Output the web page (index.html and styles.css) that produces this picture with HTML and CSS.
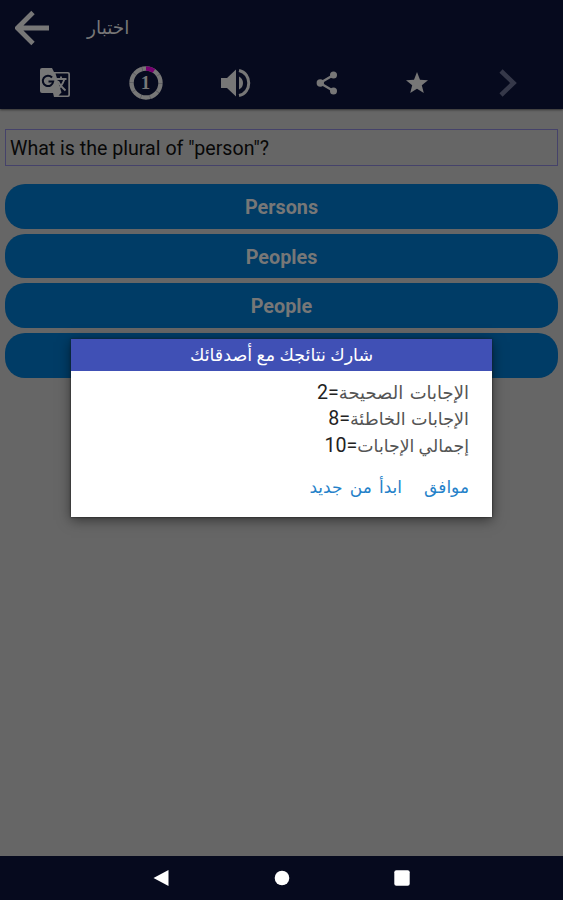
FILE: index.html
```
<!DOCTYPE html>
<html lang="ar">

<head>
  <meta charset="UTF-8">
  <meta name="viewport" content="width=device-width, initial-scale=1.0">
  <title>اختبار</title>
  <link rel="stylesheet" href="styles.css">
</head>

<body>
  <header class="header">
    <div class="header__top">
      <svg class="header__back" viewBox="0 0 36 36">
        <path d="M34 18H3M18 2.500L2.500 18L18 33.500" fill="none" stroke="currentColor" stroke-width="4.800" />
      </svg>
      <h1 class="header__title" dir="rtl">اختبار</h1>
    </div>
    <nav class="toolbar">
      <div class="toolbar__item">
        <svg width="30" height="30" viewBox="0 0 30 30">
          <path d="M2 0H12L14 4H28Q30 4 30 6V27Q30 29 28 29H14L13 25H2Q0 25 0 23V2Q0 0 2 0Z" fill="currentColor" />
          <path d="M15.500 5.500H27.300Q28.300 5.500 28.300 6.500V26.500Q28.300 27.500 27.300 27.500H18.500L21.500 24.500Z" fill="#060a1e" />
          <path d="M12 9.500A5.200 5.200 0 1 0 13.200 13.500H8.500" fill="none" stroke="#060a1e" stroke-width="2" />
          <path d="M16 11H26.500M21 8.500V11M24.500 11Q22 18 18 21M18 13Q20 18 25.500 22.500" fill="none" stroke="currentColor" stroke-width="1.900" />
        </svg>
      </div>
      <div class="toolbar__item">
        <svg width="34" height="34" viewBox="0 0 34 34">
          <circle cx="17" cy="17" r="14.500" fill="none" stroke="currentColor" stroke-width="4.400" />
          <circle cx="17" cy="17" r="14.500" fill="none" stroke="#060a1e" stroke-width="4.400" stroke-dasharray=".6 8.510" opacity=".3" />
          <path d="M17 2.500A14.500 14.500 0 0 1 25 4.900" fill="none" stroke="#760070" stroke-width="4.400" />
          <text class="toolbar__count" x="16.500" y="23" text-anchor="middle">1</text>
        </svg>
      </div>
      <div class="toolbar__item">
        <svg width="30" height="30" viewBox="0 0 30 30">
          <path d="M0 10H6L15 1.500V28.500L6 20H0Z" fill="currentColor" />
          <path d="M18 8.500Q22 10.500 22 15T18 21.500Z" fill="currentColor" />
          <path d="M18 2.500C31 5 31 25 18 27.500" fill="none" stroke="currentColor" stroke-width="3" />
        </svg>
      </div>
      <div class="toolbar__item">
        <svg width="22" height="24" viewBox="0 0 22 24">
          <path d="M17.500 4L4 12L17.500 20" fill="none" stroke="currentColor" stroke-width="2.400" />
          <circle cx="17.500" cy="4" r="3.500" fill="currentColor" />
          <circle cx="4.300" cy="12" r="3.700" fill="currentColor" />
          <circle cx="17.500" cy="20" r="3.500" fill="currentColor" />
        </svg>
      </div>
      <div class="toolbar__item">
        <svg width="22" height="22" viewBox="0 0 22 22">
          <path d="M11 0L14 7.700L22 8.200L15.800 13.200L17.800 21L11 16.700L4.200 21L6.200 13.200L0 8.200L8 7.700Z" fill="currentColor" />
        </svg>
      </div>
      <div class="toolbar__item toolbar__item--disabled">
        <svg width="18" height="28" viewBox="0 0 18 28">
          <path d="M2 2L14.500 14L2 26" fill="none" stroke="currentColor" stroke-width="4.600" />
        </svg>
      </div>
    </nav>
  </header>

  <main class="quiz">
    <div class="quiz__question" lang="en">What is the plural of "person"?</div>
    <div class="quiz__answers" lang="en">
      <button class="btn">Persons</button>
      <button class="btn">Peoples</button>
      <button class="btn">People</button>
      <button class="btn"></button>
    </div>
  </main>

  <footer class="navbar">
    <svg width="16" height="18" viewBox="0 0 16 18">
      <path d="M15.500 1V17L0.500 9Z" fill="#fff" />
    </svg>
    <svg width="16" height="16" viewBox="0 0 16 16">
      <circle cx="8" cy="8" r="7.300" fill="#fff" />
    </svg>
    <svg width="16" height="16" viewBox="0 0 16 16">
      <rect x=".3" y=".3" width="15.400" height="15.400" rx="2" fill="#fff" />
    </svg>
  </footer>

  <div class="dialog" dir="rtl">
    <h2 class="dialog__title">شارك نتائجك مع أصدقائك</h2>
    <div class="dialog__body">
      <div class="dialog__line dialog__line--correct">الإجابات الصحيحة<span class="dialog__num">=2</span></div>
      <div class="dialog__line">الإجابات الخاطئة<span class="dialog__num">=8</span></div>
      <div class="dialog__line dialog__line--total">إجمالي الإجابات<span class="dialog__num">=10</span></div>
    </div>
    <div class="dialog__actions">
      <a class="dialog__action">موافق</a>
      <a class="dialog__action">ابدأ من جديد</a>
    </div>
  </div>
</body>

</html>
```
FILE: styles.css
```
* {
  box-sizing: border-box;
}

body {
  background-color: #666;
  display: flex;
  flex-direction: column;
  font-family: Roboto, "DejaVu Sans", sans-serif;
  height: 900px;
  margin: 0;
}

.header {
  background-color: #060a1e;
  box-shadow: 0 1px 2px #333;
  color: #777;
  height: 109px;
}

.header__top {
  align-items: center;
  display: flex;
  gap: 36px;
  height: 56px;
  padding-left: 15px;
}

.header__back {
  height: 36px;
  width: 36px;
}

.header__title {
  font-size: 18.600px;
  font-weight: normal;
  margin: 0;
}

.toolbar {
  display: grid;
  grid-template-columns: repeat(6, 1fr);
  height: 53px;
  padding: 0 10px;
}

.toolbar__item {
  align-items: center;
  display: flex;
  justify-content: center;
}

.toolbar__item--disabled {
  color: #353849;
}

.toolbar__count {
  fill: currentColor;
  font-family: "Liberation Serif", serif;
  font-size: 19px;
  font-weight: bold;
}

.quiz {
  flex: 1;
  padding: 20px 5px 0;
}

.quiz__question {
  border: 1px solid #45426a;
  color: #080808;
  font-size: 19.600px;
  height: 37px;
  line-height: 37px;
  padding-left: 4px;
}

.quiz__answers {
  display: flex;
  flex-direction: column;
  gap: 5px;
  margin-top: 18px;
}

.btn {
  background-color: #003c66;
  border: none;
  border-radius: 20px;
  color: #777;
  font-family: Roboto, sans-serif;
  font-size: 19.800px;
  font-weight: bold;
  height: 44.700px;
  padding: 2px 0 0;
}

.navbar {
  align-items: center;
  background-color: #060a1e;
  display: flex;
  gap: 104.500px;
  height: 44px;
  justify-content: center;
}

.dialog {
  background-color: #fff;
  box-shadow: 0 3px 12px rgba(0, 0, 0, .5), 0 0 2px #222;
  height: 178px;
  left: 71px;
  position: absolute;
  top: 339px;
  width: 421px;
}

.dialog__title {
  background-color: #4050b5;
  color: #fff;
  font-size: 17.500px;
  font-weight: normal;
  height: 32px;
  line-height: 32px;
  margin: 0;
  text-align: center;
}

.dialog__body {
  color: #555;
  font-size: 17.600px;
  padding: 8px 23px 0;
}

.dialog__line {
  height: 27px;
  line-height: 27px;
  word-spacing: 1px;
}

.dialog__line--correct {
  font-size: 18px;
  word-spacing: 2px;
}

.dialog__line--total {
  font-size: 17.300px;
  word-spacing: 0;
}

.dialog__num {
  color: #222;
  font-size: 19.600px;
  line-height: 1;
}

.dialog__actions {
  color: #2481c9;
  display: flex;
  font-size: 17px;
  gap: 22px;
  line-height: 30px;
  padding: 12px 23px 0;
  word-spacing: 3px;
}
```
